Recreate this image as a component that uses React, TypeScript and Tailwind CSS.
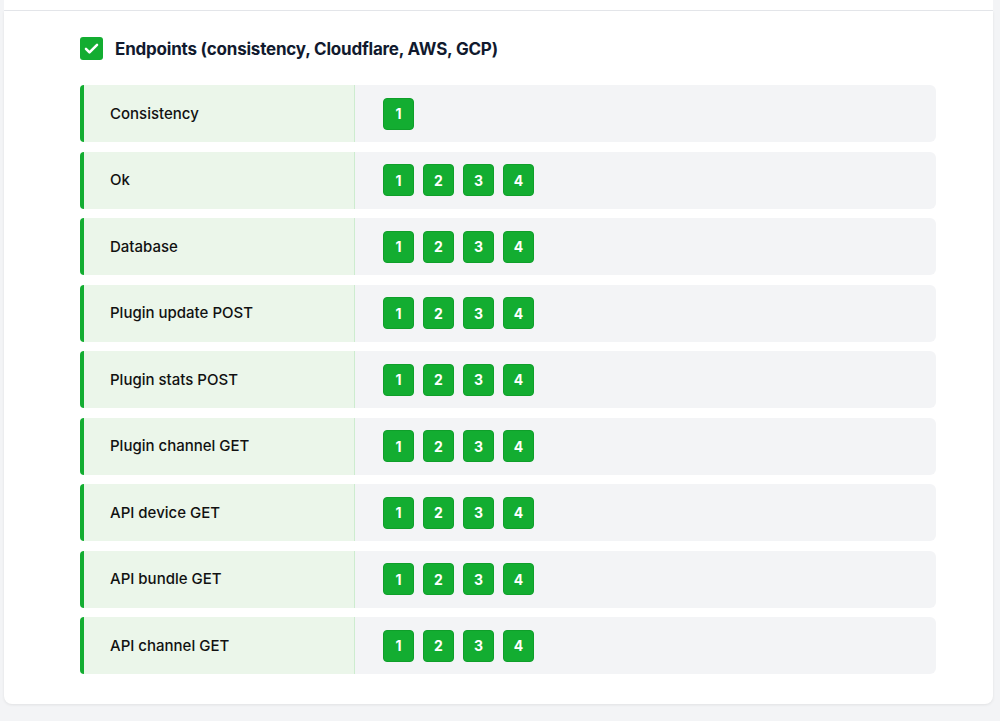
const rows: { label: string; count: number }[] = [
  { label: "Consistency", count: 1 },
  { label: "Ok", count: 4 },
  { label: "Database", count: 4 },
  { label: "Plugin update POST", count: 4 },
  { label: "Plugin stats POST", count: 4 },
  { label: "Plugin channel GET", count: 4 },
  { label: "API device GET", count: 4 },
  { label: "API bundle GET", count: 4 },
  { label: "API channel GET", count: 4 },
];

const font = { fontFamily: "Inter, 'Liberation Sans', sans-serif" };

export default function App() {
  return (
    <div className="min-h-[721px] w-full bg-[#f3f4f6] pl-[4px] pr-[7px]" style={font}>
      <div className="h-[11px] border-b border-[#e5e7eb] bg-white" />
      <div className="rounded-b-lg bg-white pl-[76px] pr-[57px] pt-[26px] pb-[30px] shadow-[0_1px_3px_rgba(0,0,0,0.08)]">
        <div className="flex h-[23px] items-center gap-3">
          <div className="flex h-[23px] w-[23px] items-center justify-center rounded-[3px] bg-[#13ad31]">
            <svg width="17" height="17" viewBox="0 0 16 16" fill="none">
              <path
                d="M2.8 8.4l3.3 3.3L13.2 4.6"
                stroke="white"
                strokeWidth="2.4"
                strokeLinecap="round"
                strokeLinejoin="round"
              />
            </svg>
          </div>
          <h2 className="mt-[2px] text-[17px] font-bold tracking-[-0.2px] text-[#111a2e]">
            Endpoints (consistency, Cloudflare, AWS, GCP)
          </h2>
        </div>
        <div className="mt-[25px] flex flex-col gap-[9.5px]">
          {rows.map((row) => (
            <div key={row.label} className="flex h-[57px]">
              <div className="flex w-[275px] items-center rounded-l-[4px] border-l-[4px] border-r border-l-[#13ad31] border-r-[#cdeccf] bg-[#ebf6ea] pl-[26px] pt-[1px] text-[15px] font-medium text-[#111111]">
                {row.label}
              </div>
              <div className="flex flex-1 items-center gap-[9px] rounded-r-[6px] bg-[#f3f4f6] pl-[28px]">
                {Array.from({ length: row.count }, (_, i) => (
                  <span
                    key={i}
                    className="flex h-[32px] w-[31px] items-center justify-center rounded-[4px] border border-[#0f9f2a] bg-[#13ad31] text-[14px] font-bold text-white"
                  >
                    {i + 1}
                  </span>
                ))}
              </div>
            </div>
          ))}
        </div>
      </div>
    </div>
  );
}
